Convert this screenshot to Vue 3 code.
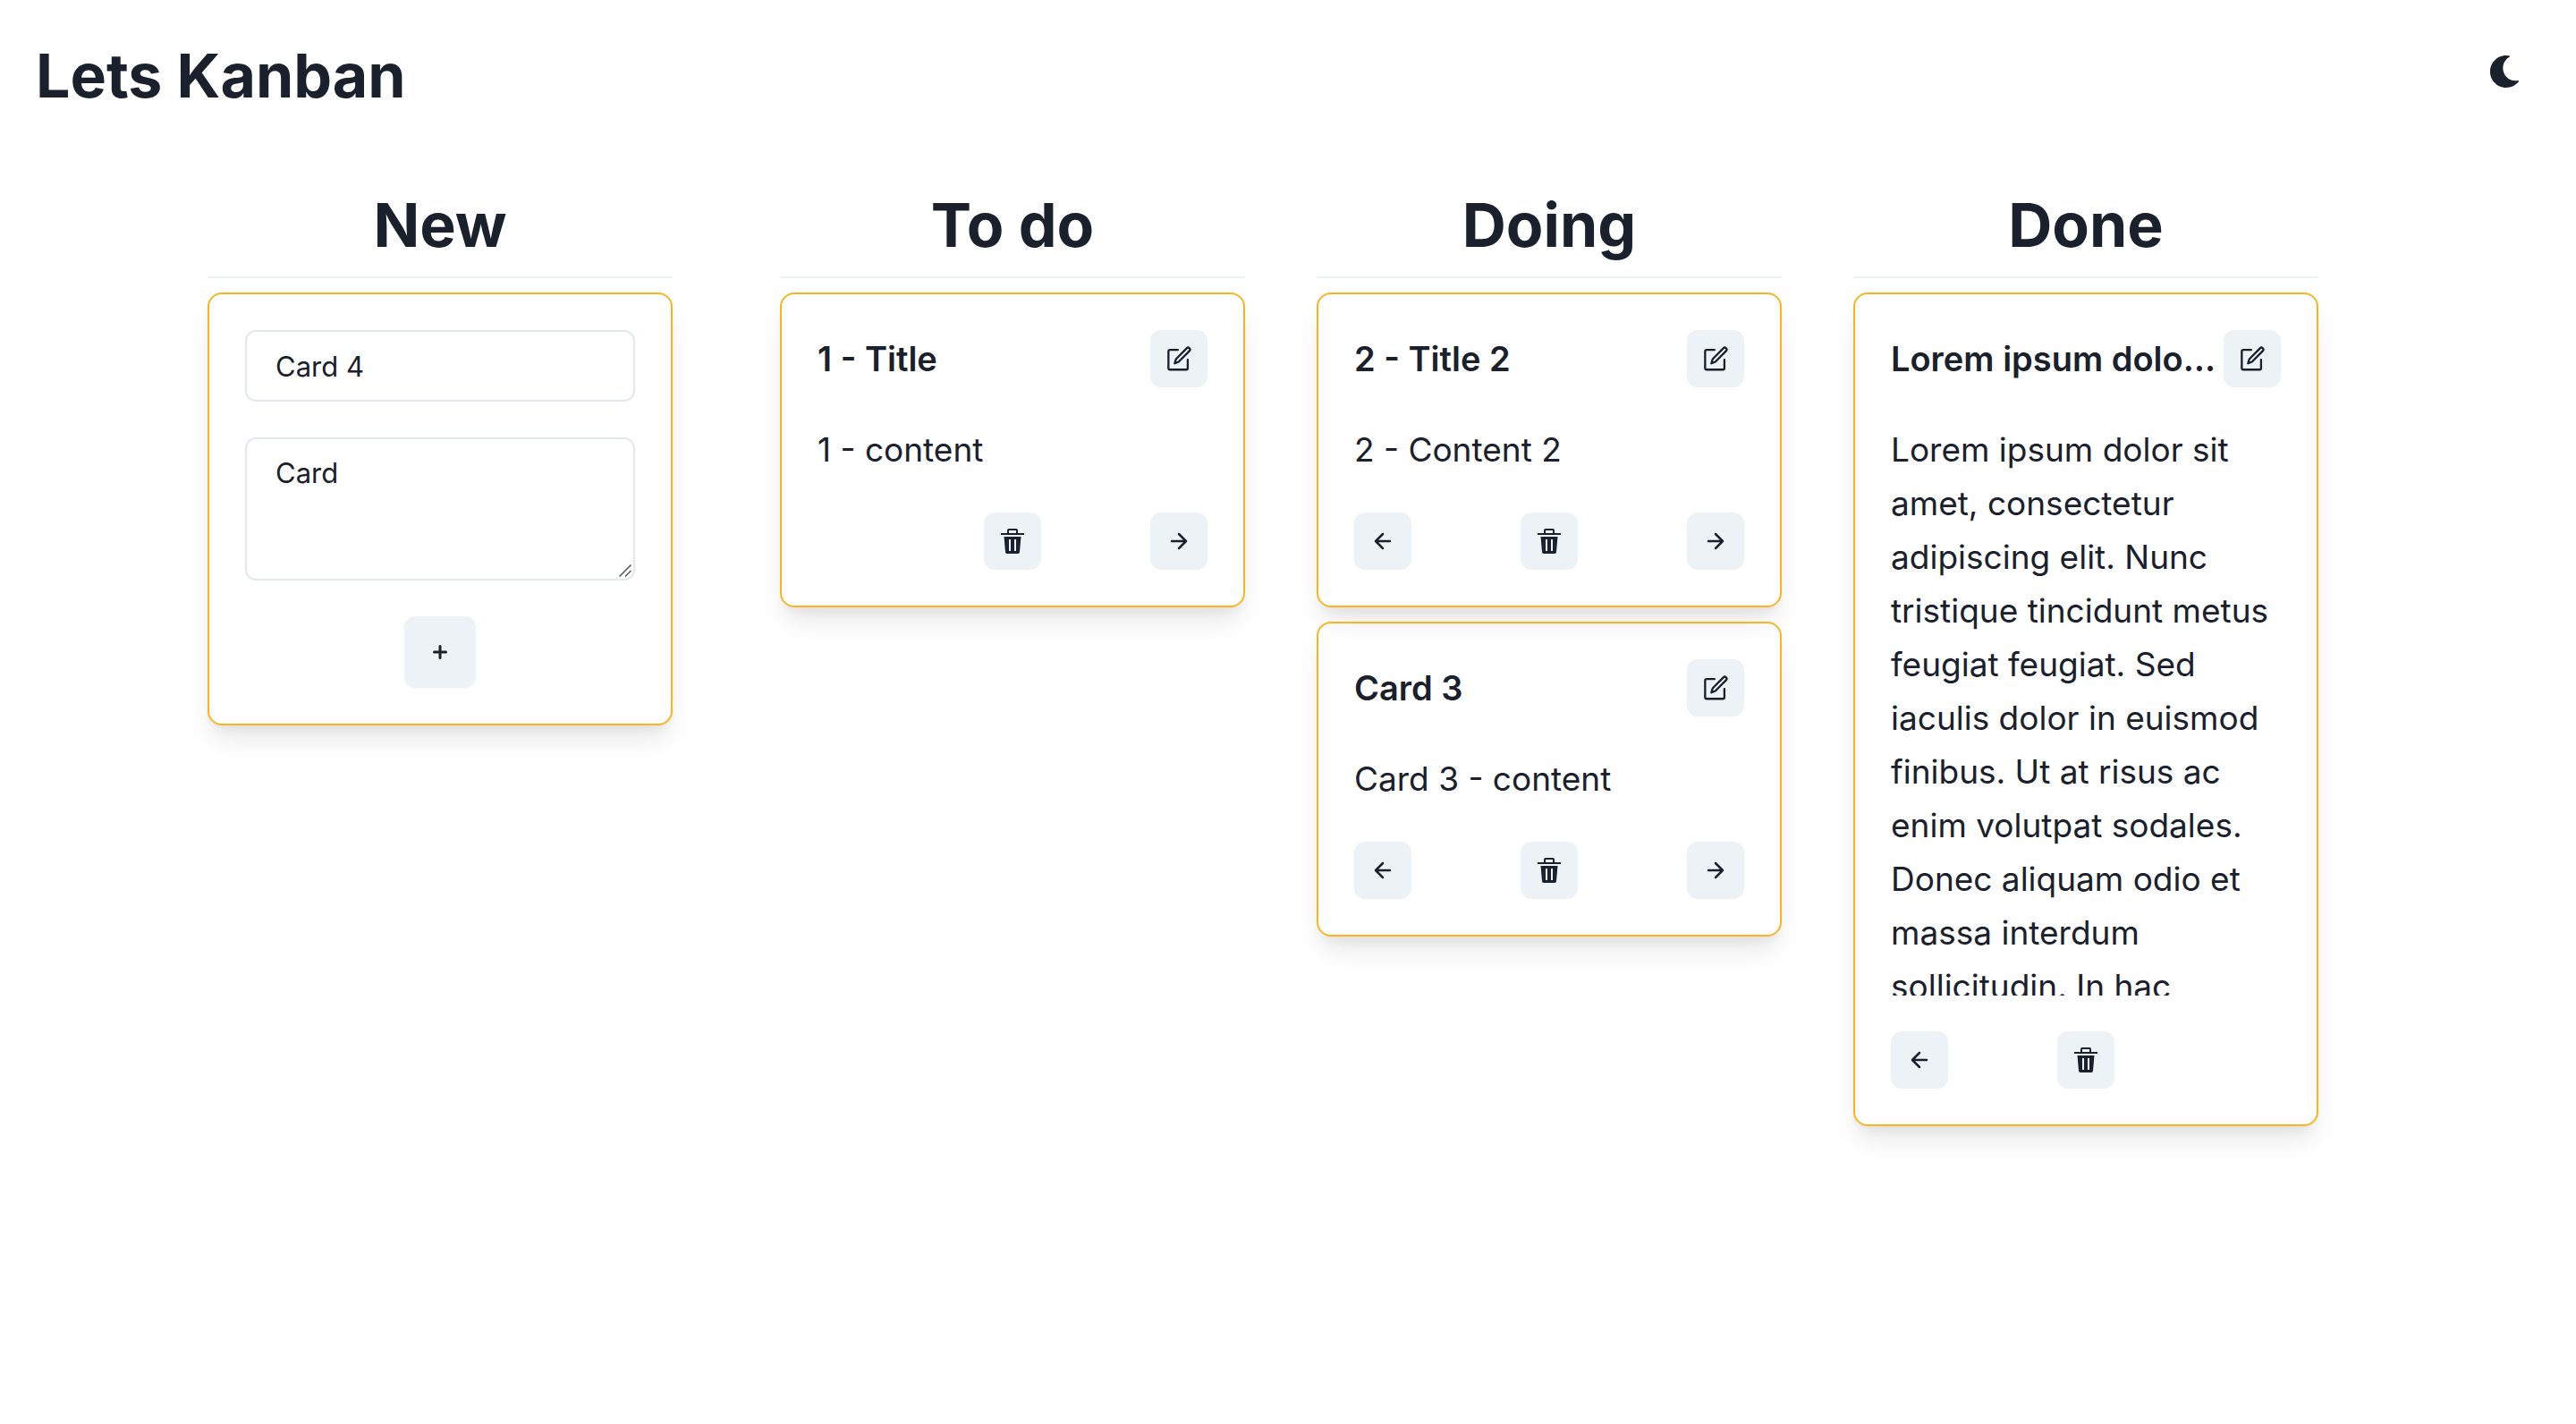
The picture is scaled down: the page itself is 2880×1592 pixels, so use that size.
<script setup>
import { ref } from 'vue'

const draftTitle = ref('Card 4')
const draftContent = ref('Card')

const lorem =
  'Lorem ipsum dolor sit amet, consectetur adipiscing elit. Nunc tristique tincidunt metus feugiat feugiat. Sed iaculis dolor in euismod finibus. Ut at risus ac enim volutpat sodales. Donec aliquam odio et massa interdum sollicitudin. In hac'

const columns = ref([
  { name: 'To do', cards: [{ title: '1 - Title', content: '1 - content' }] },
  {
    name: 'Doing',
    cards: [
      { title: '2 - Title 2', content: '2 - Content 2' },
      { title: 'Card 3', content: 'Card 3 - content' },
    ],
  },
  { name: 'Done', cards: [{ title: 'Lorem ipsum dolor sit amet', content: lorem }] },
])

function addCard() {
  columns.value[0].cards.push({ title: draftTitle.value, content: draftContent.value })
}
function removeCard(col, index) {
  columns.value[col].cards.splice(index, 1)
}
function moveCard(col, index, step) {
  const [card] = columns.value[col].cards.splice(index, 1)
  columns.value[col + step].cards.push(card)
}
</script>

<template>
  <div class="page">
    <header class="topbar">
      <h1>Lets Kanban</h1>
      <button class="theme" type="button" aria-label="Toggle dark mode">
        <svg viewBox="0 0 512 512" width="36" height="36" fill="currentColor">
          <path d="M283.211 512c78.962 0 151.079-35.925 198.857-94.792 7.068-8.708-.639-21.43-11.562-19.35-124.203 23.654-238.262-71.576-238.262-196.954 0-72.222 38.662-138.635 101.498-174.394 9.686-5.512 7.25-20.197-3.756-22.23A258.156 258.156 0 0 0 283.211 0c-141.309 0-256 114.511-256 256 0 141.309 114.511 256 256 256z" />
        </svg>
      </button>
    </header>

    <main class="board">
      <section class="column column-new">
        <h2>New</h2>
        <form class="card" @submit.prevent="addCard">
          <input v-model="draftTitle" class="field" type="text" aria-label="Title" />
          <div class="area">
            <textarea v-model="draftContent" class="field" aria-label="Content"></textarea>
            <svg class="grip" viewBox="0 0 14 14" width="14" height="14" fill="none" stroke="#555" stroke-width="1.5">
              <path d="M0.5 13.5l13-13M7 13.5l6.5-6.5" />
            </svg>
          </div>
          <button class="icon-button large" type="submit" aria-label="Add card">
            <svg viewBox="0 0 16 16" width="16" height="16" fill="none" stroke="currentColor" stroke-width="3" stroke-linecap="round">
              <path d="M8 1.5v13M1.5 8h13" />
            </svg>
          </button>
        </form>
      </section>

      <section v-for="(column, c) in columns" :key="column.name" class="column">
        <h2>{{ column.name }}</h2>
        <article v-for="(card, i) in column.cards" :key="card.title" class="card">
          <div class="card-head">
            <h3>{{ card.title }}</h3>
            <button class="icon-button" type="button" aria-label="Edit card">
              <svg viewBox="0 0 24 24" width="28" height="28" fill="none" stroke="currentColor" stroke-width="2" stroke-linecap="round" stroke-linejoin="round">
                <path d="M11 3.5H3.5a1.5 1.5 0 0 0-1.5 1.5v16a1.5 1.5 0 0 0 1.5 1.5h15.5a1.5 1.5 0 0 0 1.5-1.5V13" />
                <path d="M19.5 2a1.8 1.8 0 0 1 2.6 2.6L11.8 15 8 16.5l1.2-4.1z" />
              </svg>
            </button>
          </div>
          <p class="content">{{ card.content }}</p>
          <div class="actions">
            <button v-if="c > 0" class="icon-button to-left" type="button" aria-label="Move left" @click="moveCard(c, i, -1)">
              <svg viewBox="0 0 20 20" width="20" height="20" fill="none" stroke="currentColor" stroke-width="2.5" stroke-linecap="round" stroke-linejoin="round">
                <path d="M18 10H2M10 2l-8 8 8 8" />
              </svg>
            </button>
            <button class="icon-button to-centre" type="button" aria-label="Delete card" @click="removeCard(c, i)">
              <svg viewBox="0 0 28 28" width="28" height="28" fill="currentColor">
                <path d="M1 5h7V2a2 2 0 0 1 2-2h8a2 2 0 0 1 2 2v3h7v2H1zM10 2v3h8V2zM4.5 9h19l-1.5 17a2 2 0 0 1-2 2H8a2 2 0 0 1-2-2zM10 12v13h2V12zM16 12v13h2V12z" fill-rule="evenodd" />
              </svg>
            </button>
            <button v-if="c < columns.length - 1" class="icon-button to-right" type="button" aria-label="Move right" @click="moveCard(c, i, 1)">
              <svg viewBox="0 0 20 20" width="20" height="20" fill="none" stroke="currentColor" stroke-width="2.5" stroke-linecap="round" stroke-linejoin="round">
                <path d="M2 10h16M10 2l8 8-8 8" />
              </svg>
            </button>
          </div>
        </article>
      </section>
    </main>
  </div>
</template>

<style>
body {
  margin: 0;
  background: #fff;
}
</style>

<style scoped>
.page {
  font-family: Inter, "Liberation Sans", sans-serif;
  color: #1a202c;
}
h1,
h2,
h3,
p {
  margin: 0;
}
h1,
h2 {
  font-size: 68px;
  line-height: 88px;
  font-weight: 700;
}
button {
  border: 0;
  padding: 0;
  color: inherit;
  cursor: pointer;
}
svg {
  display: block;
}
.topbar {
  display: flex;
  justify-content: space-between;
  align-items: flex-start;
  padding: 40px;
}
.theme {
  display: grid;
  place-items: center;
  width: 80px;
  height: 80px;
  background: none;
}
.board {
  display: flex;
  justify-content: center;
  align-items: flex-start;
  gap: 80px;
  padding: 39px 288px 80px 232px;
}
.column {
  display: flex;
  flex: 1 1 0;
  flex-direction: column;
  gap: 16px;
  min-width: 0;
  max-width: 520px;
}
.column-new {
  margin-right: 40px;
}
h2 {
  padding-bottom: 14px;
  border-bottom: 2px solid #edf2f7;
  text-align: center;
}
.card {
  display: flex;
  flex-direction: column;
  gap: 40px;
  padding: 40px;
  border: 2px solid #fbb321;
  border-radius: 16px;
  box-shadow: 0 20px 30px -6px rgba(0, 0, 0, 0.1), 0 8px 12px -4px rgba(0, 0, 0, 0.05);
}
.field {
  display: block;
  box-sizing: border-box;
  width: 100%;
  height: 80px;
  padding: 0 32px;
  border: 2px solid #e2e8f0;
  border-radius: 12px;
  outline: 0;
  background: none;
  color: inherit;
  font: 400 31px/44px Inter, "Liberation Sans", sans-serif;
}
.area {
  position: relative;
}
textarea.field {
  height: 160px;
  padding: 16px 32px;
  resize: none;
}
.grip {
  position: absolute;
  right: 4px;
  bottom: 4px;
}
.icon-button {
  display: grid;
  flex: none;
  place-items: center;
  width: 64px;
  height: 64px;
  border-radius: 12px;
  background: #edf2f7;
}
.icon-button.large {
  align-self: center;
  width: 80px;
  height: 80px;
}
.card-head {
  display: flex;
  justify-content: space-between;
  align-items: center;
  gap: 8px;
}
h3 {
  overflow: hidden;
  font-size: 38px;
  line-height: 60px;
  font-weight: 600;
  text-overflow: ellipsis;
  white-space: nowrap;
}
.content {
  max-height: 640px;
  overflow: hidden;
  font-size: 37px;
  line-height: 60px;
}
.actions {
  display: grid;
  grid-template-columns: 1fr auto 1fr;
}
.to-left {
  grid-column: 1;
}
.to-centre {
  grid-column: 2;
}
.to-right {
  grid-column: 3;
  justify-self: end;
}
</style>
